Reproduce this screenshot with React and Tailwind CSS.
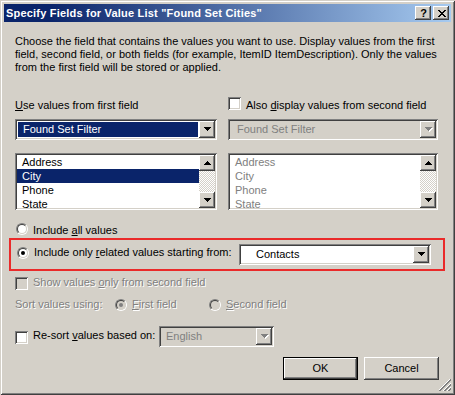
import React from "react";

const sunken =
  "shadow-[inset_1px_1px_0_#808080,inset_-1px_-1px_0_#ffffff,inset_2px_2px_0_#404040,inset_-2px_-2px_0_#d4d0c8]";
const raised =
  "shadow-[inset_-1px_-1px_0_#404040,inset_1px_1px_0_#ffffff,inset_-2px_-2px_0_#808080,inset_2px_2px_0_#d4d0c8]";
const dis = "text-[#808080] [text-shadow:1px_1px_0_#ffffff]";

function Arrow({ up, disabled }) {
  const rows = up
    ? [
        [3, 0, 1],
        [2, 1, 3],
        [1, 2, 5],
        [0, 3, 7],
      ]
    : [
        [0, 0, 7],
        [1, 1, 5],
        [2, 2, 3],
        [3, 3, 1],
      ];
  return (
    <svg width="8" height="5" viewBox="0 0 8 5" className="block">
      {disabled &&
        rows.map(([x, y, w], i) => (
          <rect key={"s" + i} x={x + 1} y={y + 1} width={w} height="1" fill="#ffffff" />
        ))}
      {rows.map(([x, y, w], i) => (
        <rect key={i} x={x} y={y} width={w} height="1" fill={disabled ? "#808080" : "#000000"} />
      ))}
    </svg>
  );
}

function DropBtn({ disabled }) {
  return (
    <div className={`w-[16px] h-[17px] bg-[#d4d0c8] ${raised} flex items-center justify-center pl-[1px]`}>
      <Arrow disabled={disabled} />
    </div>
  );
}

function Combo({ className, text, selected, disabled, textClass }) {
  return (
    <div className={`h-[21px] ${className} ${sunken} ${disabled ? "bg-[#d4d0c8]" : "bg-white"} p-[2px] flex`}>
      <div className="flex-1 min-w-0 p-[1px]">
        <div
          className={`h-[15px] leading-[15px] whitespace-nowrap ${textClass} ${
            selected ? "bg-[#0a246a] text-white" : disabled ? "text-[#808080]" : "text-black"
          }`}
        >
          {text}
        </div>
      </div>
      <DropBtn disabled={disabled} />
    </div>
  );
}

function ScrollBtn({ up }) {
  return (
    <div className={`w-[16px] h-[16px] bg-[#d4d0c8] ${raised} flex items-center justify-center pl-[1px]`}>
      <Arrow up={up} />
    </div>
  );
}

function ListBox({ items, selected, gray }) {
  return (
    <div className={`h-[57px] w-full bg-white ${sunken} p-[2px] flex`}>
      <div className="flex-1 overflow-hidden">
        {items.map((it) => (
          <div
            key={it}
            className={`h-[14px] leading-[14px] pl-[5px] whitespace-nowrap ${
              it === selected ? "bg-[#0a246a] text-white" : gray ? "text-[#808080]" : "text-black"
            }`}
          >
            {it}
          </div>
        ))}
      </div>
      <div className="w-[16px] flex flex-col">
        <ScrollBtn up />
        <div className="flex-1 bg-[image:repeating-conic-gradient(#d4d0c8_0_25%,#ffffff_0_50%)] bg-[length:2px_2px]" />
        <ScrollBtn />
      </div>
    </div>
  );
}

function CheckBox({ disabled, className }) {
  return (
    <div
      className={`w-[13px] h-[13px] shrink-0 ${sunken} ${disabled ? "bg-[#d4d0c8]" : "bg-white"} ${className || ""}`}
    />
  );
}

function Radio({ checked, disabled, className }) {
  return (
    <div
      className={`w-[12px] h-[12px] shrink-0 rounded-full border border-t-[#808080] border-l-[#808080] border-b-white border-r-white ${
        className || ""
      }`}
    >
      <div
        className={`w-full h-full rounded-full border border-t-[#404040] border-l-[#404040] border-b-[#d4d0c8] border-r-[#d4d0c8] flex items-center justify-center ${
          disabled ? "bg-[#d4d0c8]" : "bg-white"
        }`}
      >
        {checked && (
          <div className={`w-[4px] h-[4px] rounded-full ${disabled ? "bg-[#808080]" : "bg-black"}`} />
        )}
      </div>
    </div>
  );
}

export default function App() {
  return (
    <div
      className={`w-[455px] h-[395px] bg-[#d4d0c8] p-[4px] relative font-['Liberation_Sans',Arial,sans-serif] text-[11px] leading-[13px] text-black shadow-[inset_1px_1px_0_#d4d0c8,inset_-1px_-1px_0_#404040,inset_2px_2px_0_#ffffff,inset_-2px_-2px_0_#808080] overflow-hidden`}
    >
      {/* Title bar */}
      <div className="h-[18px] flex items-center justify-between pl-[2px] pr-[2px] bg-[linear-gradient(to_right,#0a246a_10%,#a6caf0)]">
        <div className="text-white font-bold text-[11px] leading-[18px] tracking-[0.2px] whitespace-nowrap">
          Specify Fields for Value List "Found Set Cities"
        </div>
        <div className="flex gap-[2px]">
          <div
            className={`w-[16px] h-[14px] bg-[#d4d0c8] ${raised} flex items-center justify-center font-bold text-[11px] leading-[14px] pl-[1px]`}
          >
            ?
          </div>
          <div className={`w-[16px] h-[14px] bg-[#d4d0c8] ${raised} flex items-center justify-center pl-[1px]`}>
            <svg width="8" height="7" viewBox="0 0 8 7" className="block">
              <g fill="#000">
                <rect x="0" y="0" width="2" height="1" />
                <rect x="6" y="0" width="2" height="1" />
                <rect x="1" y="1" width="2" height="1" />
                <rect x="5" y="1" width="2" height="1" />
                <rect x="2" y="2" width="4" height="1" />
                <rect x="3" y="3" width="2" height="1" />
                <rect x="2" y="4" width="4" height="1" />
                <rect x="1" y="5" width="2" height="1" />
                <rect x="5" y="5" width="2" height="1" />
                <rect x="0" y="6" width="2" height="1" />
                <rect x="6" y="6" width="2" height="1" />
              </g>
            </svg>
          </div>
        </div>
      </div>

      {/* Body */}
      <div className="flex flex-col pl-[11px]">
        <p className="mt-[13px] whitespace-nowrap">
          Choose the field that contains the values you want to use. Display values from the first
          <br />
          field, second field, or both fields (for example, ItemID ItemDescription). Only the values
          <br />
          from the first field will be stored or applied.
        </p>

        {/* Labels row */}
        <div className="mt-[23px] h-[13px] flex">
          <div className="w-[202px] mt-[2px] whitespace-nowrap">
            <u>U</u>se values from first field
          </div>
          <div className="ml-[11px] flex">
            <CheckBox />
            <div className="ml-[5px] mt-[2px] whitespace-nowrap">
              Also <u>d</u>isplay values from second field
            </div>
          </div>
        </div>

        {/* Combos row */}
        <div className="mt-[9px] flex">
          <Combo className="w-[202px]" text="Found Set Filter" selected textClass="pl-[5px]" />
          <Combo className="ml-[11px] w-[210px]" text="Found Set Filter" disabled textClass="pl-[6px]" />
        </div>

        {/* Lists row */}
        <div className="mt-[13px] flex">
          <div className="w-[202px]">
            <ListBox items={["Address", "City", "Phone", "State"]} selected="City" />
          </div>
          <div className="ml-[11px] w-[210px]">
            <ListBox items={["Address", "City", "Phone", "State"]} gray />
          </div>
        </div>

        {/* Include all values */}
        <div className="mt-[13px] h-[13px] flex">
          <Radio className="ml-[1px]" />
          <div className="ml-[5px] mt-[1px] whitespace-nowrap">
            Include <u>a</u>ll values
          </div>
        </div>

        {/* Highlighted row */}
        <div className="mt-[2px] -ml-[6px] w-[436px] border-2 border-[#ea2a2a] pl-[5px] pt-[4px] pb-[4px]">
          <div className="h-[21px] flex">
            <Radio checked className="mt-[3px] ml-[1px]" />
            <div className="ml-[5px] mt-[2px] w-[205px] whitespace-nowrap">
              Include only <u>r</u>elated values starting from:
            </div>
            <Combo className="w-[192px]" text="Contacts" textClass="pl-[14px]" />
          </div>
        </div>

        {/* Show values only from second field */}
        <div className="mt-[5px] h-[13px] flex">
          <CheckBox disabled className="mt-[1px]" />
          <div className={`ml-[5px] whitespace-nowrap ${dis}`}>
            Show values <u>o</u>nly from second field
          </div>
        </div>

        {/* Sort values using */}
        <div className="mt-[9px] h-[13px] flex">
          <div className={`w-[100px] whitespace-nowrap ${dis}`}>Sort values using:</div>
          <Radio checked disabled className="mt-[1px]" />
          <div className={`ml-[5px] w-[77px] whitespace-nowrap ${dis}`}>
            <u>F</u>irst field
          </div>
          <Radio disabled className="mt-[1px]" />
          <div className={`ml-[5px] whitespace-nowrap ${dis}`}>
            <u>S</u>econd field
          </div>
        </div>

        {/* Re-sort */}
        <div className="mt-[15px] h-[21px] flex">
          <CheckBox className="mt-[5px]" />
          <div className="ml-[5px] mt-[3px] w-[126px] whitespace-nowrap">
            Re-sort <u>v</u>alues based on:
          </div>
          <Combo className="w-[115px]" text="English" disabled textClass="pl-[4px]" />
        </div>

        {/* Buttons */}
        <div className="mt-[10px] flex justify-end pr-[12px] gap-[6px]">
          <div className="w-[75px] h-[23px] border border-black">
            <div className={`w-full h-full bg-[#d4d0c8] ${raised} flex items-center justify-center`}>OK</div>
          </div>
          <div className={`w-[75px] h-[23px] bg-[#d4d0c8] ${raised} flex items-center justify-center`}>
            Cancel
          </div>
        </div>
      </div>

      {/* Resize grip */}
      <svg width="12" height="12" viewBox="0 0 12 12" className="absolute right-[4px] bottom-[4px] block">
        <g strokeWidth="1" shapeRendering="crispEdges">
          <path d="M11 0 L0 11" stroke="#ffffff" />
          <path d="M12 0 L0 12" stroke="#808080" />
          <path d="M12 1 L1 12" stroke="#808080" />
          <path d="M12 4 L4 12" stroke="#ffffff" />
          <path d="M12 5 L5 12" stroke="#808080" />
          <path d="M12 6 L6 12" stroke="#808080" />
          <path d="M12 8 L8 12" stroke="#ffffff" />
          <path d="M12 9 L9 12" stroke="#808080" />
          <path d="M12 10 L10 12" stroke="#808080" />
        </g>
      </svg>
    </div>
  );
}
